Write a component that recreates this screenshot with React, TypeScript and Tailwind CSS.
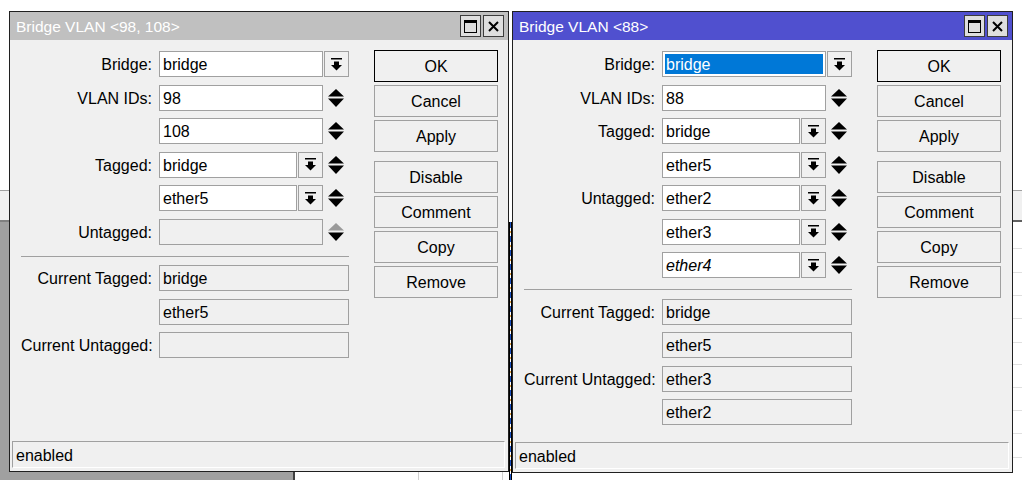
import type { ReactNode } from "react";

// MikroTik-style "Bridge VLAN" dialogs, two windows on a desktop

function DropIcon() {
  return (
    <svg width="11" height="13" viewBox="0 0 11 13">
      <rect x="0" y="0" width="11" height="1.5" fill="#000" />
      <rect x="3" y="3.5" width="5" height="3.5" fill="#000" />
      <polygon points="0,7 11,7 5.5,12.5" fill="#000" />
    </svg>
  );
}

function DropBtn() {
  return (
    <div className="ml-[1px] flex h-full w-[25px] items-center justify-center border border-[#a0a0a0] bg-[#f0f0f0]">
      <DropIcon />
    </div>
  );
}

function Spin({ upDisabled }: { upDisabled?: boolean }) {
  return (
    <svg width="16" height="18" viewBox="0 0 16 18" className="ml-[5px]">
      <polygon points="8,0 16,7.5 0,7.5" fill={upDisabled ? "#9a9a9a" : "#000"} />
      <polygon points="0,9.5 16,9.5 8,18" fill="#000" />
    </svg>
  );
}

function Field({
  value,
  narrow,
  italic,
  disabled,
  selected,
}: {
  value?: string;
  narrow?: boolean;
  italic?: boolean;
  disabled?: boolean;
  selected?: boolean;
}) {
  return (
    <div
      className={`flex h-full items-center border border-[#a0a0a0] text-[16px] ${narrow ? "w-[138px]" : "w-[164px]"} ${disabled ? "bg-[#f0f0f0]" : "bg-white"} ${selected ? "p-[2px]" : "pl-[3px] pt-[2px]"}`}
    >
      {selected ? (
        <div className="flex h-full w-full items-center bg-[#0078d7] pl-[1px] pt-[2px] text-white">{value}</div>
      ) : (
        <span className={italic ? "italic" : ""}>{value}</span>
      )}
    </div>
  );
}

function ReadOnly({ value }: { value?: string }) {
  return (
    <div className="flex h-full w-[190px] items-center border border-[#a0a0a0] bg-[#f0f0f0] pl-[3px] pt-[2px] text-[16px]">
      {value}
    </div>
  );
}

function Row({ label, children }: { label?: string; children: ReactNode }) {
  return (
    <div className="flex h-[26px] items-center">
      <div className="w-[131px] shrink-0 whitespace-nowrap pt-[2px] text-right text-[16px]">{label}</div>
      <div className="ml-[7px] flex h-full items-center">{children}</div>
    </div>
  );
}

function Btn({ label, main, className = "" }: { label: string; main?: boolean; className?: string }) {
  return (
    <div
      className={`flex h-[32px] w-[124px] items-center justify-center border bg-[#f0f0f0] pt-[2px] text-[16px] ${main ? "border-black" : "border-[#a0a0a0]"} ${className}`}
    >
      {label}
    </div>
  );
}

function TitleBtn({ children }: { children: ReactNode }) {
  return (
    <div className="flex h-[22px] w-[21px] items-center justify-center border border-[#3c3c3c] bg-[#dedede]">
      {children}
    </div>
  );
}

function Win({
  title,
  active,
  className,
  top,
  bottom,
}: {
  title: string;
  active?: boolean;
  className: string;
  top: ReactNode;
  bottom: ReactNode;
}) {
  return (
    <div className={`absolute top-[11px] flex flex-col border border-[#202020] bg-[#f0f0f0] ${className}`}>
      <div className={`flex h-[28px] shrink-0 items-center justify-between ${active ? "bg-[#5050cf]" : "bg-[#c0c0c0]"}`}>
        <span className="pl-[6px] pt-[2px] text-[15.5px] text-white">{title}</span>
        <div className="mr-[4px] flex gap-[2px]">
          <TitleBtn>
            <svg width="13" height="13" viewBox="0 0 13 13">
              <rect x="0.5" y="0.5" width="12" height="12" fill="none" stroke="#000" strokeWidth="1" />
              <rect x="0" y="0" width="13" height="3" fill="#000" />
            </svg>
          </TitleBtn>
          <TitleBtn>
            <svg width="11" height="11" viewBox="0 0 11 11">
              <path d="M1 1 L10 10 M10 1 L1 10" stroke="#000" strokeWidth="2" />
            </svg>
          </TitleBtn>
        </div>
      </div>

      <div className="flex flex-1 pl-[11px] pt-[10px]">
        <div className="mt-[1px] flex w-[328px] flex-col">
          <div className="flex flex-col gap-[7.5px]">{top}</div>
          <div className="mt-[11px] h-px bg-[#a0a0a0]" />
          <div className="mt-[8.5px] flex flex-col gap-[7.5px]">{bottom}</div>
        </div>

        <div className="ml-[25px] flex flex-col gap-[3px]">
          <Btn label="OK" main />
          <Btn label="Cancel" />
          <Btn label="Apply" />
          <Btn label="Disable" className="mt-[6px]" />
          <Btn label="Comment" />
          <Btn label="Copy" />
          <Btn label="Remove" />
        </div>
      </div>

      <div className="mb-[3px] ml-[2px] mr-[3px] flex h-[27px] items-center border border-b-white border-l-[#a0a0a0] border-r-white border-t-[#a0a0a0] pl-[3px] pt-[2px] text-[16px]">
        enabled
      </div>
    </div>
  );
}

export default function App() {
  const rightLines = [248, 272, 295, 318, 342, 364, 387, 410, 433, 457];

  return (
    <div className="relative h-[480px] w-[1022px] overflow-hidden bg-white font-['Liberation_Sans',Arial,sans-serif] text-black">
      {/* desktop behind the windows */}
      <div className="absolute left-0 top-[190px] h-px w-[9px] bg-[#a0a0a0]" />
      <div className="absolute left-0 top-[191px] h-[29px] w-[9px] bg-[#f0f0f0]" />
      <div className="absolute left-0 top-[220px] h-[2px] w-[9px] bg-[#808080]" />
      <div className="absolute left-0 top-[222px] h-[258px] w-[9px] bg-[#a0a0a0]" />
      <div className="absolute left-0 top-[472px] h-[8px] w-[293px] bg-[#a0a0a0]" />
      <div className="absolute left-[293px] top-[472px] h-[8px] w-[2px] bg-[#404040]" />
      <div className="absolute left-[418px] top-[472px] h-[8px] w-px bg-[#d0d0d0]" />
      <div className="absolute left-[502px] top-[472px] h-[8px] w-px bg-[#d0d0d0]" />
      <div className="absolute left-[509px] top-[222px] h-[258px] w-[3px] border-x border-black bg-[repeating-linear-gradient(180deg,#1a50c0_0px,#1a50c0_6px,#ffffff_6px,#ffffff_9px,#e0a040_9px,#e0a040_11px,#ffffff_11px,#ffffff_14px)]" />
      <div className="absolute left-[1013px] top-[190px] h-px w-[9px] bg-[#a0a0a0]" />
      <div className="absolute left-[1013px] top-[191px] h-[29px] w-[9px] bg-[#f0f0f0]" />
      <div className="absolute left-[1013px] top-[220px] h-[2px] w-[9px] bg-[#606060]" />
      {rightLines.map((y) => (
        <div key={y} className="absolute left-[1013px] h-px w-[9px] bg-[#e0e0e0]" style={{ top: y }} />
      ))}

      <Win
        title="Bridge VLAN <98, 108>"
        className="left-[9px] h-[461px] w-[500px]"
        top={
          <>
            <Row label="Bridge:">
              <Field value="bridge" />
              <DropBtn />
            </Row>
            <Row label="VLAN IDs:">
              <Field value="98" />
              <Spin />
            </Row>
            <Row>
              <Field value="108" />
              <Spin />
            </Row>
            <Row label="Tagged:">
              <Field value="bridge" narrow />
              <DropBtn />
              <Spin />
            </Row>
            <Row>
              <Field value="ether5" narrow />
              <DropBtn />
              <Spin />
            </Row>
            <Row label="Untagged:">
              <Field disabled />
              <Spin upDisabled />
            </Row>
          </>
        }
        bottom={
          <>
            <Row label="Current Tagged:">
              <ReadOnly value="bridge" />
            </Row>
            <Row>
              <ReadOnly value="ether5" />
            </Row>
            <Row label="Current Untagged:">
              <ReadOnly />
            </Row>
          </>
        }
      />

      <Win
        title="Bridge VLAN <88>"
        active
        className="left-[512px] h-[462px] w-[501px]"
        top={
          <>
            <Row label="Bridge:">
              <Field value="bridge" selected />
              <DropBtn />
            </Row>
            <Row label="VLAN IDs:">
              <Field value="88" />
              <Spin />
            </Row>
            <Row label="Tagged:">
              <Field value="bridge" narrow />
              <DropBtn />
              <Spin />
            </Row>
            <Row>
              <Field value="ether5" narrow />
              <DropBtn />
              <Spin />
            </Row>
            <Row label="Untagged:">
              <Field value="ether2" narrow />
              <DropBtn />
              <Spin />
            </Row>
            <Row>
              <Field value="ether3" narrow />
              <DropBtn />
              <Spin />
            </Row>
            <Row>
              <Field value="ether4" narrow italic />
              <DropBtn />
              <Spin />
            </Row>
          </>
        }
        bottom={
          <>
            <Row label="Current Tagged:">
              <ReadOnly value="bridge" />
            </Row>
            <Row>
              <ReadOnly value="ether5" />
            </Row>
            <Row label="Current Untagged:">
              <ReadOnly value="ether3" />
            </Row>
            <Row>
              <ReadOnly value="ether2" />
            </Row>
          </>
        }
      />
    </div>
  );
}
